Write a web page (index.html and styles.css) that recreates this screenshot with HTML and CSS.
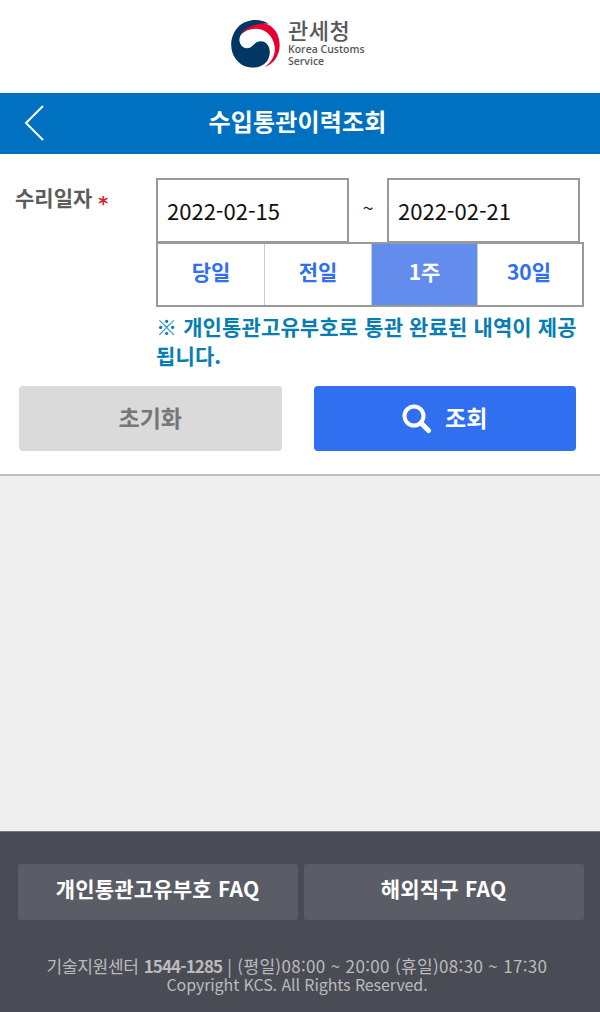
FILE: index.html
```html
<!DOCTYPE html>
<html lang="ko">
<head>
<meta charset="utf-8">
<title>수입통관이력조회</title>
<link rel="stylesheet" href="styles.css">
</head>
<body>
<header class="brand">
  <svg class="emblem" viewBox="0 0 147 144">
    <path class="red" d="M29 44C46 17 76 6 100 10C130 18 146 45 146 75C146 107 128 132 100 142C122 126 134 106 131 80C127 49 106 28 78 26C58 25 42 32 29 44Z"/>
    <path class="navy" d="M114 12C88 -6 47 -4 22 20C-4 47 -6 90 14 116C34 146 80 152 104 128C120 112 120 84 107 71C94 59 78 63 68 74C58 85 46 88 36 81C22 71 22 52 34 38C54 15 86 7 114 12Z"/>
  </svg>
  <div class="brand-name">
    <strong>관세청</strong>
    <span>Korea Customs</span>
    <span>Service</span>
  </div>
</header>
<div class="titlebar">
  <svg class="back" viewBox="0 0 20 36"><path d="M19 1L2 18L19 35"/></svg>
  <h1>수입통관이력조회</h1>
</div>
<main>
  <section class="search">
    <div class="row">
      <label class="label">수리일자 <b>*</b></label>
      <div class="fields">
        <div class="dates">
          <div class="date">2022-02-15</div>
          <span class="tilde">~</span>
          <div class="date">2022-02-21</div>
        </div>
        <div class="periods">
          <div class="period">당일</div>
          <div class="period">전일</div>
          <div class="period active">1주</div>
          <div class="period">30일</div>
        </div>
        <p class="note">※ 개인통관고유부호로 통관 완료된 내역이 제공됩니다.</p>
      </div>
    </div>
    <div class="actions">
      <div class="button reset">초기화</div>
      <div class="button submit">
        <svg class="lens" viewBox="0 0 30 30"><circle cx="12" cy="12" r="9.5"/><path class="handle" d="M19 19L26.5 26.5"/></svg>
        <span>조회</span>
      </div>
    </div>
  </section>
</main>
<footer>
  <div class="faq">
    <div class="faq-link">개인통관고유부호 FAQ</div>
    <div class="faq-link">해외직구 FAQ</div>
  </div>
  <p class="contact"><span class="center">기술지원센터</span> <b>1544-1285</b> | (평일)08:00 ~ 20:00 (휴일)08:30 ~ 17:30</p>
  <p class="copy">Copyright KCS. All Rights Reserved.</p>
</footer>
</body>
</html>
```
FILE: styles.css
```css
* { box-sizing: border-box; }
body {
  margin: 0;
  height: 1012px;
  display: flex;
  flex-direction: column;
  background: #efefef;
  font-family: "Noto Sans CJK KR", sans-serif;
  overflow: hidden;
}
p, h1 { margin: 0; }
.brand {
  height: 93px;
  background: #fff;
  display: flex;
  align-items: flex-start;
  padding: 19px 0 0 231px;
}
.emblem { width: 49px; height: 48px; margin-top: 1px; overflow: visible; }
.red { fill: #e6002d; }
.navy { fill: #003764; }
.brand-name {
  display: flex;
  flex-direction: column;
  margin-left: 8px;
  color: #58585a;
}
.brand-name strong { font-size: 22px; line-height: 20px; font-weight: 500; margin-bottom: 5px; letter-spacing: 0.5px; }
.brand-name span { font: 600 10.5px/11.5px "Open Sans", sans-serif; }
.titlebar {
  height: 61px;
  background: #0070c0;
  display: grid;
  grid-template-columns: 50px 1fr 55px;
  align-items: center;
}
.back { width: 20px; height: 36px; margin: 0 0 2px 24px; fill: none; stroke: #fff; stroke-width: 2; }
.titlebar h1 { color: #fff; font-size: 24px; line-height: 30px; font-weight: 700; letter-spacing: 0.2px; text-align: center; margin-bottom: 5px; }
.search {
  height: 322px;
  background: #fff;
  border-bottom: 2px solid #c0c0c0;
  padding-top: 24px;
}
.row { display: flex; padding-left: 15px; }
.label { width: 141px; font-size: 21px; line-height: 30px; font-weight: 700; color: #5c5c5c; padding-top: 4px; }
.label b { display: inline-block; height: 20px; font: 700 19px/20px "DejaVu Sans", sans-serif; color: #d2232a; vertical-align: -4px; }
.fields { width: 428px; }
.dates { display: flex; }
.date {
  width: 193px;
  height: 65px;
  border: 2px solid #999;
  padding: 0 9px;
  font-size: 22px;
  line-height: 61px;
  color: #111;
}
.tilde { width: 38px; text-align: center; font-size: 20px; line-height: 60px; color: #333; }
.periods {
  display: grid;
  grid-template-columns: 107px 107px 106px 1fr;
  height: 65px;
  margin-top: -1px;
  border: 2px solid #999;
}
.period {
  color: #3070f0;
  font-size: 21px;
  line-height: 55px;
  font-weight: 700;
  text-align: center;
  border-right: 1px solid #ccc;
}
.period:last-child { border-right: 0; padding-right: 2px; }
.active { background: #628dec; color: #fff; }
.note { margin-top: 5px; color: #087eb0; font-size: 21px; line-height: 29px; font-weight: 700; letter-spacing: 0.13px; word-break: break-all; }
.actions { display: flex; gap: 32px; padding: 16px 24px 0 19px; }
.button {
  flex: 1;
  height: 65px;
  padding-bottom: 3px;
  border-radius: 4px;
  font-size: 23px;
  font-weight: 700;
  display: flex;
  align-items: center;
  justify-content: center;
}
.reset { background: #dadada; color: #777; }
.submit { background: #3070f0; color: #fff; gap: 13px; }
.lens { width: 30px; height: 30px; margin-top: 4px; fill: none; stroke: #fff; stroke-width: 4; stroke-linecap: round; }
.handle { stroke-width: 5; }
footer {
  margin-top: auto;
  height: 181px;
  background: #4a4c55;
  border-top: 1px solid #74767d;
  padding-top: 32px;
  text-align: center;
  color: #bbb;
}
.faq { display: flex; gap: 6px; padding: 0 16px 0 18px; }
.faq-link {
  flex: 1;
  height: 56px;
  border-radius: 3px;
  background: #5b5d66;
  color: #fff;
  font-size: 21px;
  line-height: 49px;
  font-weight: 700;
  letter-spacing: 0.2px;
  padding-right: 1px;
}
.contact { margin-top: 36px; padding-right: 6px; font-size: 17px; line-height: 20px; letter-spacing: 0.34px; white-space: nowrap; }
.contact .center { letter-spacing: -0.3px; }
.contact b { letter-spacing: -0.9px; }
.copy { padding-right: 6px; font-size: 16px; line-height: 17px; letter-spacing: -0.08px; }
```
